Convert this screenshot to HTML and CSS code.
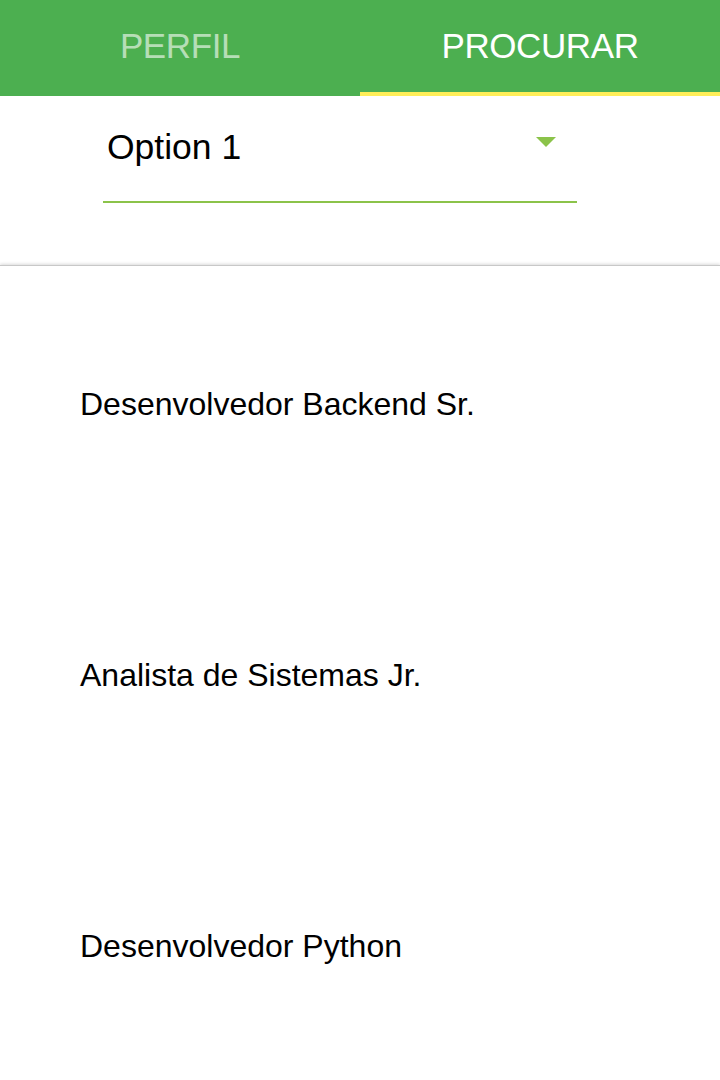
FILE: index.html
```html
<!DOCTYPE html>
<html lang="pt">
<head>
<meta charset="utf-8">
<link rel="stylesheet" href="styles.css">
</head>
<body>
<header class="tabs">
  <div class="tab">PERFIL</div>
  <div class="tab active">PROCURAR</div>
</header>
<section class="filter">
  <div class="select">
    <span class="select-value">Option 1</span>
    <span class="caret"></span>
  </div>
</section>
<ul class="list">
  <li class="item">Desenvolvedor Backend Sr.</li>
  <li class="item">Analista de Sistemas Jr.</li>
  <li class="item">Desenvolvedor Python</li>
</ul>
</body>
</html>
```
FILE: styles.css
```css
html, body {
  margin: 0;
  padding: 0;
  background: #fff;
  font-family: "Liberation Sans", Arial, Helvetica, sans-serif;
  color: #000;
}
.tabs {
  display: grid;
  grid-template-columns: 1fr 1fr;
  height: 96px;
  background: #4caf50;
}
.tab {
  box-sizing: border-box;
  height: 96px;
  padding-top: 26px;
  text-align: center;
  font-size: 35px;
  line-height: 40px;
  letter-spacing: -0.4px;
  color: rgba(255, 255, 255, 0.6);
  border-bottom: 4px solid transparent;
}
.tab.active {
  color: #fff;
  border-bottom-color: #ffee58;
}
.filter {
  padding: 0 143px 0 103px;
  margin-bottom: 62px;
}
.select {
  display: flex;
  justify-content: space-between;
  align-items: flex-start;
  padding: 31px 21px 34px 4px;
  border-bottom: 2px solid #8bc34a;
}
.select-value {
  font-size: 35.5px;
  line-height: 40px;
}
.caret {
  width: 0;
  height: 0;
  margin-top: 10px;
  border-left: 10px solid transparent;
  border-right: 10px solid transparent;
  border-top: 10px solid #8bc34a;
}
.list {
  list-style: none;
  margin: 0;
  padding: 2px 0 0;
  border-top: 1px solid #c8c8c8;
  box-shadow: 0 -1px 3px rgba(0, 0, 0, 0.15);
}
.item {
  height: 271px;
  display: flex;
  align-items: center;
  padding-left: 80px;
  font-size: 32px;
  line-height: 40px;
}
```
